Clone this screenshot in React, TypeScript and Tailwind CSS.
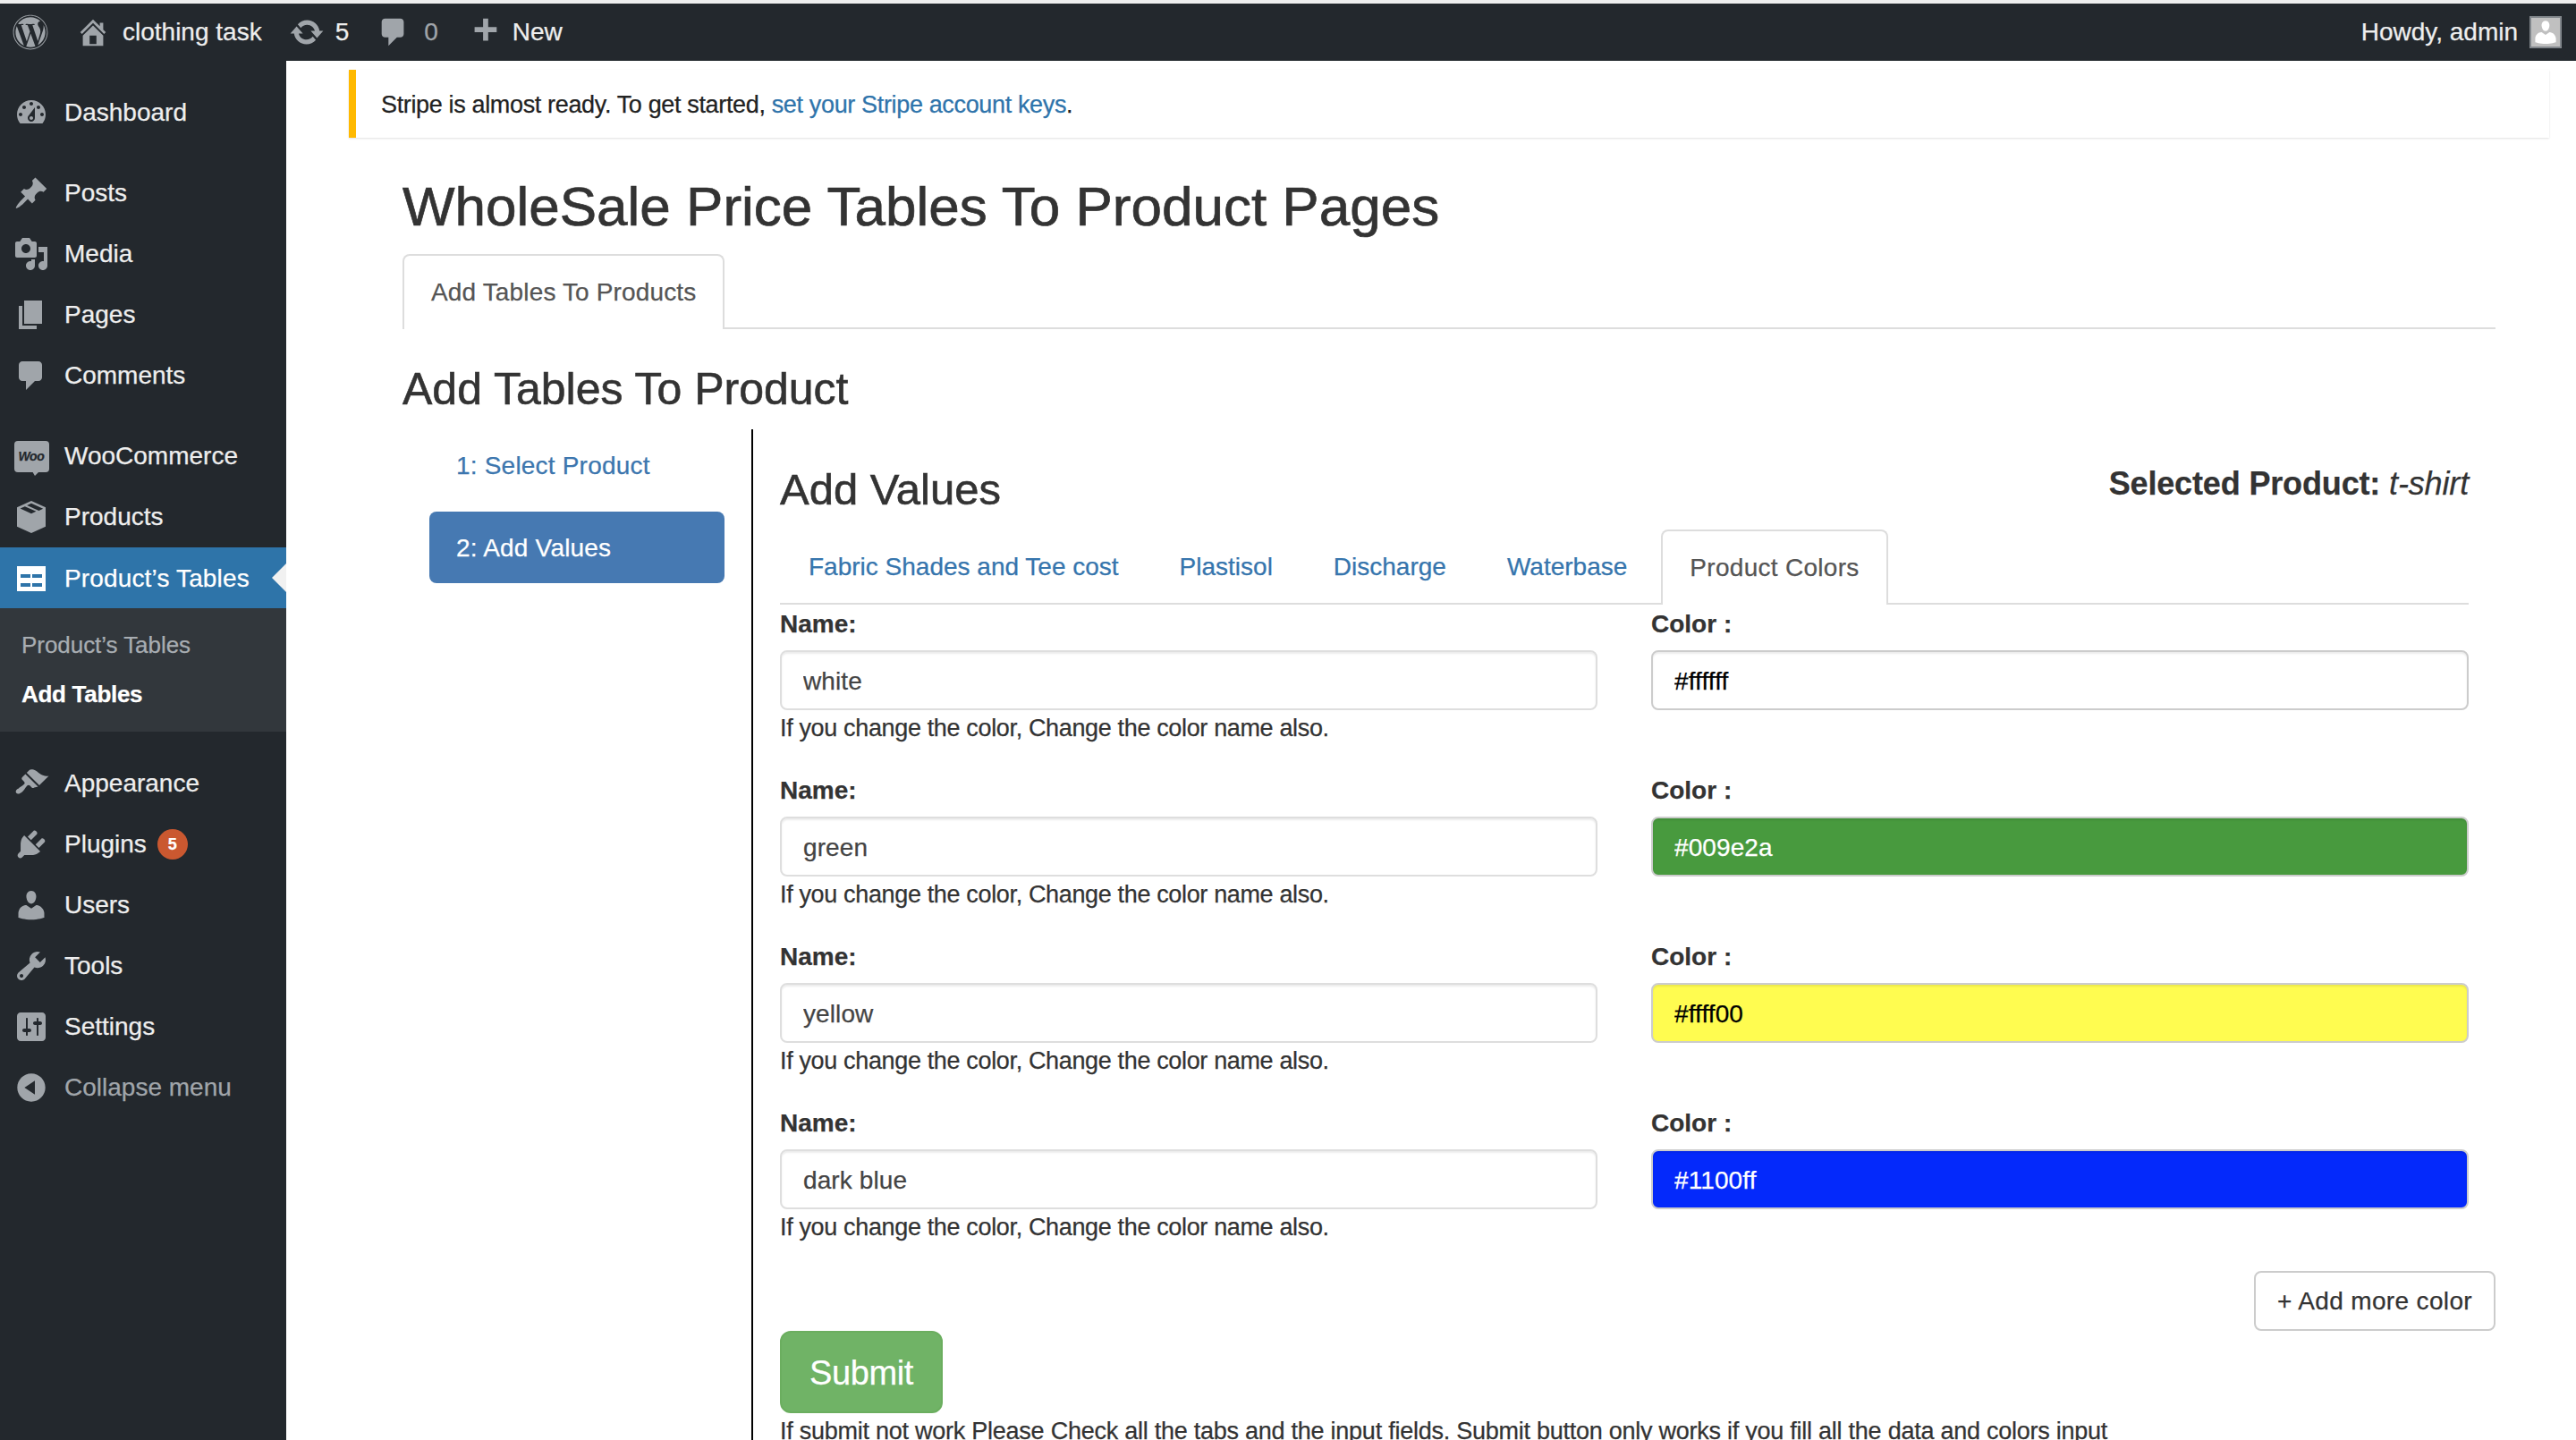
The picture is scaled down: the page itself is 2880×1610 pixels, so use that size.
import { ReactNode } from "react";
import { FaWordpress } from "react-icons/fa";

// Dashicons outlines, all on a 20x20 grid.
const ICONS: Record<string, string> = {
  dashboard:
    "M3.76 16h12.48c1.1-1.37 1.76-3.11 1.76-5 0-4.42-3.58-8-8-8s-8 3.58-8 8c0 1.89.66 3.63 1.76 5zM10 4c.55 0 1 .45 1 1s-.45 1-1 1-1-.45-1-1 .45-1 1-1zM6 6c.55 0 1 .45 1 1s-.45 1-1 1-1-.45-1-1 .45-1 1-1zm8 0c.55 0 1 .45 1 1s-.45 1-1 1-1-.45-1-1 .45-1 1-1zm-5.37 5.55L12 7v6c0 1.1-.9 2-2 2s-2-.9-2-2c0-.57.24-1.08.63-1.45zM4 10c.55 0 1 .45 1 1s-.45 1-1 1-1-.45-1-1 .45-1 1-1zm12 0c.55 0 1 .45 1 1s-.45 1-1 1-1-.45-1-1 .45-1 1-1zm-5 3c0-.55-.45-1-1-1s-1 .45-1 1 .45 1 1 1 1-.45 1-1z",
  post: "M10.44 3.02l1.82-1.82 6.36 6.35-1.83 1.82c-1.05-.68-2.48-.57-3.41.36l-.75.75c-.92.93-1.04 2.35-.35 3.41l-1.83 1.82-2.41-2.41-2.8 2.79c-.42.42-3.38 2.71-3.8 2.29s1.86-3.39 2.28-3.81l2.79-2.79L4.1 9.36l1.83-1.82c1.05.69 2.48.57 3.4-.36l.75-.75c.93-.92 1.05-2.35.36-3.41z",
  media:
    "M13 11V4c0-.55-.45-1-1-1h-1.67L9 1H5L3.67 3H2c-.55 0-1 .45-1 1v7c0 .55.45 1 1 1h10c.55 0 1-.45 1-1zM7 4.5c1.38 0 2.5 1.12 2.5 2.5S8.38 9.5 7 9.5 4.5 8.38 4.5 7 5.62 4.5 7 4.5zM14 6h5v10.5c0 1.38-1.12 2.5-2.5 2.5S14 17.88 14 16.5s1.12-2.5 2.5-2.5c.17 0 .34.02.5.05V9h-3V6zm-4 8.05V13h2v3.5c0 1.38-1.12 2.5-2.5 2.5S7 17.88 7 16.5 8.12 14 9.5 14c.17 0 .34.02.5.05z",
  page: "M6 15V2h10v13H6zm-1 1h8v2H3V5h2v11z",
  comment: "M5 2h9c1.1 0 2 .9 2 2v7c0 1.1-.9 2-2 2h-2l-5 5v-5H5c-1.1 0-2-.9-2-2V4c0-1.1.9-2 2-2z",
  box: "M10 1l8 3.6v10.8L10 19l-8-3.6V4.6zM10 2.4L7.6 3.5l6.6 3 2.4-1.1zM6.4 4.1L3.8 5.3l6.2 2.8 2.7-1.2z",
  brush:
    "M14.48 11.06L7.41 3.99l1.5-1.5c.5-.56 2.3-.47 3.51.32 1.21.8 1.43 1.28 2.91 2.1 1.18.64 2.45 1.26 4.45.85zm-.71.71L6.7 4.7 4.93 6.47c-.39.39-.39 1.02 0 1.41l1.06 1.06c.39.39.39 1.03 0 1.42-.6.6-1.43 1.11-2.21 1.69-.35.26-.7.53-1.01.84C1.43 13.23.99 14.72 1.7 15.43c.71.71 2.2.26 3.54-1.08.31-.31.58-.66.84-1.01.58-.78 1.09-1.61 1.69-2.21.39-.39 1.02-.39 1.41 0l1.06 1.06c.39.39 1.02.39 1.41 0z",
  plug: "M13.11 4.36L9.87 7.6 8 5.73l3.24-3.24c.35-.34 1.05-.2 1.56.32.52.51.66 1.21.31 1.55zm-8 1.77l.91-1.12 9.01 9.01-1.19.84c-.71.71-2.63 1.16-3.82 1.16H6.14L4.9 17.26c-.59.59-1.54.59-2.12 0-.59-.58-.59-1.53 0-2.12l1.24-1.24v-3.88c0-1.13.4-3.19 1.09-3.89zm7.26 3.97l3.24-3.24c.34-.35 1.04-.21 1.55.31.52.51.66 1.21.31 1.55l-3.24 3.25z",
  user: "M10 9.25c-2.27 0-2.73-3.44-2.73-3.44C7 4.02 7.82 2 9.97 2c2.16 0 2.98 2.02 2.71 3.81 0 0-.41 3.44-2.68 3.44zm0 2.57L12.72 10c2.39 0 4.52 2.33 4.52 4.53v2.49s-3.65 1.13-7.24 1.13c-3.65 0-7.24-1.13-7.24-1.13v-2.49c0-2.25 1.94-4.48 4.47-4.48z",
  tools:
    "M16.68 9.77c-1.34 1.34-3.3 1.67-4.95.99l-5.41 6.52c-.99.99-2.59.99-3.58 0s-.99-2.59 0-3.57l6.52-5.42c-.68-1.65-.35-3.61.99-4.95 1.28-1.28 3.12-1.62 4.72-1.06l-2.89 2.89 2.82 2.82 2.86-2.87c.53 1.58.18 3.39-1.08 4.65zM3.81 16.21c.4.39 1.04.39 1.43 0 .4-.4.4-1.04 0-1.43-.39-.4-1.03-.4-1.43 0-.39.39-.39 1.03 0 1.43z",
  settings:
    "M18 16V4c0-1.1-.9-2-2-2H4c-1.1 0-2 .9-2 2v12c0 1.1.9 2 2 2h12c1.1 0 2-.9 2-2zM8 11h1c.55 0 1 .45 1 1s-.45 1-1 1H8v1.5c0 .28-.22.5-.5.5s-.5-.22-.5-.5V13H6c-.55 0-1-.45-1-1s.45-1 1-1h1V5.5c0-.28.22-.5.5-.5s.5.22.5.5V11zm5-2h-1c-.55 0-1-.45-1-1s.45-1 1-1h1V5.5c0-.28.22-.5.5-.5s.5.22.5.5V7h1c.55 0 1 .45 1 1s-.45 1-1 1h-1v5.5c0 .28-.22.5-.5.5s-.5-.22-.5-.5V9z",
  collapse: "M10 2.16c4.33 0 7.84 3.51 7.84 7.84s-3.51 7.84-7.84 7.84S2.16 14.33 2.16 10 5.71 2.16 10 2.16zm2 11.72V6.12L6.18 9.97z",
  home: "M16 8.5l1.53 1.53-1.06 1.06L10 4.62l-6.47 6.47-1.06-1.06L10 2.5l4 4v-2h2v4zm-6-2.46l6 5.99V18H4v-5.97zM12 17v-5H8v5h4z",
  update:
    "M10.2 3.28c3.53 0 6.43 2.61 6.92 6h2.08l-3.5 4-3.5-4h2.32c-.45-1.97-2.21-3.44-4.32-3.44-1.45 0-2.73.71-3.54 1.78L4.95 5.66C6.23 4.2 8.11 3.28 10.2 3.28zm-.4 13.44c-3.52 0-6.43-2.61-6.92-6H.8l3.5-4c1.17 1.33 2.33 2.67 3.5 4H5.48c.45 1.97 2.21 3.44 4.32 3.44 1.45 0 2.73-.71 3.54-1.78l1.71 1.95c-1.28 1.46-3.15 2.38-5.25 2.38z",
  plus: "M17 7v3h-5v5H9v-5H4V7h5V2h3v5h5z",
};

function Dash({ name, className }: { name: string; className: string }) {
  return (
    <svg viewBox="0 0 20 20" className={className} fill="currentColor" fillRule="evenodd">
      <path d={ICONS[name]} />
    </svg>
  );
}

function WooIcon() {
  return (
    <div className="relative flex h-[35px] w-[39px] items-center justify-center rounded-[4px] bg-[#a0a5aa] text-[14px] font-bold italic tracking-[-0.3px] text-[#23282d]">
      Woo
      <div className="absolute -bottom-[4px] left-[20px] h-0 w-0 border-t-[5px] border-r-[5px] border-l-[3px] border-t-[#a0a5aa] border-r-transparent border-l-transparent" />
    </div>
  );
}

function TableIcon() {
  return (
    <svg viewBox="0 0 32 28" className="h-[28px] w-[32px]" fill="white" fillRule="evenodd">
      <path d="M0 0h32v28H0zM4 9v4h11V9zM17 9v4h11V9zM4 19v4h11v-4zM17 19v4h11v-4z" />
    </svg>
  );
}

function MenuItem({
  icon,
  label,
  extra,
  muted,
}: {
  icon: ReactNode;
  label: string;
  extra?: ReactNode;
  muted?: boolean;
}) {
  return (
    <div className={`flex h-[68px] items-center pt-[2px] text-[28px] ${muted ? "text-[#a0a5aa]" : "text-[#eeeeee]"}`}>
      <div className="flex w-[72px] flex-none items-center justify-center pr-[2px] text-[#a0a5aa]">{icon}</div>
      {label}
      {extra}
    </div>
  );
}

const sideIcon = "h-[40px] w-[40px]";

function Sidebar() {
  return (
    <aside className="w-[320px] flex-none bg-[#23282d] pt-[23px]">
      <MenuItem icon={<Dash name="dashboard" className={sideIcon} />} label="Dashboard" />
      <div className="mt-[22px]">
        <MenuItem icon={<Dash name="post" className={sideIcon} />} label="Posts" />
        <MenuItem icon={<Dash name="media" className={sideIcon} />} label="Media" />
        <MenuItem icon={<Dash name="page" className={sideIcon} />} label="Pages" />
        <MenuItem icon={<Dash name="comment" className={sideIcon} />} label="Comments" />
      </div>
      <div className="mt-[22px]">
        <MenuItem icon={<WooIcon />} label="WooCommerce" />
        <MenuItem icon={<Dash name="box" className={sideIcon} />} label="Products" />
      </div>
      <div className="relative mt-[1px] flex h-[68px] items-center bg-[#2e74a9] pt-[2px] text-[28px] tracking-[0.15px] text-white">
        <div className="flex w-[72px] flex-none items-center justify-center pr-[2px]">
          <TableIcon />
        </div>
        Product’s Tables
        <div className="absolute right-0 top-[18px] h-0 w-0 border-y-[16px] border-r-[16px] border-y-transparent border-r-[#f1f1f1]" />
      </div>
      <div className="h-[138px] bg-[#32373c] pl-[24px] pt-[14px] text-[26px]">
        <div className="flex h-[55px] items-center tracking-[-0.05px] text-[#a8adb2]">Product’s Tables</div>
        <div className="flex h-[55px] items-center font-bold tracking-[-0.3px] text-white">Add Tables</div>
      </div>
      <div className="mt-[23px]">
        <MenuItem icon={<Dash name="brush" className={sideIcon} />} label="Appearance" />
        <MenuItem
          icon={<Dash name="plug" className={sideIcon} />}
          label="Plugins"
          extra={
            <span className="ml-[12px] flex h-[34px] w-[34px] items-center justify-center rounded-full bg-[#ca5830] text-[18px] font-bold text-white">
              5
            </span>
          }
        />
        <MenuItem icon={<Dash name="user" className={sideIcon} />} label="Users" />
        <MenuItem icon={<Dash name="tools" className={sideIcon} />} label="Tools" />
        <MenuItem icon={<Dash name="settings" className={sideIcon} />} label="Settings" />
        <MenuItem icon={<Dash name="collapse" className={sideIcon} />} label="Collapse menu" muted />
      </div>
    </aside>
  );
}

function AdminBar() {
  return (
    <header className="flex h-[64px] flex-none items-center bg-[#23282d] text-[28px] text-[#eeeeee]">
      <FaWordpress className="ml-[14px] h-[40px] w-[40px] text-[#a0a5aa]" />
      <Dash name="home" className="ml-[31px] h-[38px] w-[38px] text-[#a0a5aa]" />
      <span className="ml-[14px]">clothing task</span>
      <Dash name="update" className="ml-[30px] h-[40px] w-[40px] text-[#a0a5aa]" />
      <span className="ml-[12px]">5</span>
      <Dash name="comment" className="ml-[31px] h-[38px] w-[38px] text-[#a0a5aa]" />
      <span className="ml-[15px] text-[#a0a5aa]">0</span>
      <Dash name="plus" className="ml-[33px] h-[38px] w-[38px] text-[#a0a5aa]" />
      <span className="ml-[12px]">New</span>
      <span className="ml-auto mr-[13px]">Howdy, admin</span>
      <div className="mr-[16px] h-[36px] w-[36px] overflow-hidden border-2 border-[#82878c] bg-[#c0c0c0]">
        <Dash name="user" className="h-[32px] w-[32px] text-white" />
      </div>
    </header>
  );
}

const TABS = ["Fabric Shades and Tee cost", "Plastisol", "Discharge", "Waterbase"];

const COLORS = [
  { name: "white", value: "#ffffff", input: "bg-white text-black" },
  { name: "green", value: "#009e2a", input: "bg-[#489a3e] text-white" },
  { name: "yellow", value: "#ffff00", input: "bg-[#fffc50] text-black" },
  { name: "dark blue", value: "#1100ff", input: "bg-[#0429fb] text-white" },
];

const fieldBase =
  "block h-[67px] w-full rounded-[8px] border-2 px-[24px] pt-[2px] text-[28px] tracking-[0.1px] shadow-[inset_0_2px_2px_rgba(0,0,0,0.08)] outline-none";

function ColorRow({ name, value, input }: { name: string; value: string; input: string }) {
  return (
    <div className="mb-[30px] grid grid-cols-2 gap-x-[60px]">
      <div>
        <label className="mb-[9px] block h-[41px] font-bold leading-[41px] tracking-[0px]">Name:</label>
        <input readOnly value={name} className={`${fieldBase} border-[#dedede] bg-white text-[#444]`} />
        <p className="h-[39px] text-[27px] leading-[41px]">If you change the color, Change the color name also.</p>
      </div>
      <div>
        <label className="mb-[9px] block h-[41px] font-bold leading-[41px] tracking-[0px]">Color :</label>
        <input readOnly value={value} className={`${fieldBase} border-[#cccccc] ${input}`} />
      </div>
    </div>
  );
}

function AddValues() {
  return (
    <div className="min-w-0 flex-1 pl-[30px] pr-[30px] pt-[40px]">
      <div className="flex items-start justify-between">
        <h3 className="pt-[2px] text-[49px] leading-[51px] tracking-[0px] text-[#333] [-webkit-text-stroke:0.6px_#333]">
          Add Values
        </h3>
        <div className="pt-[1px] text-[36px] leading-[40px] tracking-[-0.15px] text-[#333]">
          <b className="font-bold">Selected Product:</b> <i>t-shirt</i>
        </div>
      </div>
      <div className="mt-[19px] flex h-[84px] items-stretch border-b-2 border-[#dddddd] pl-[2px] text-[28px] tracking-[0px]">
        {TABS.map((t) => (
          <div key={t} className="mr-[8px] flex items-center px-[30px] pt-[2px] text-[#3675ad]">
            {t}
          </div>
        ))}
        <div className="-mb-[2px] flex items-center rounded-t-[8px] border-2 border-b-0 border-[#dddddd] bg-white px-[30px] tracking-[0.3px] text-[#555]">
          Product Colors
        </div>
      </div>
      <div className="pt-[1px]">
        {COLORS.map((c) => (
          <ColorRow key={c.name} {...c} />
        ))}
      </div>
      <div className="-mr-[30px] mt-[3px] flex justify-end">
        <button className="h-[67px] w-[270px] rounded-[8px] border-2 border-[#cccccc] bg-white text-[28px] tracking-[0.35px] text-[#333]">
          + Add more color
        </button>
      </div>
      <button className="block h-[92px] w-[182px] rounded-[12px] border-2 border-[#6bae5f] bg-[#70b366] pt-[2px] text-[38px] tracking-[-0.4px] text-white">
        Submit
      </button>
      <p className="whitespace-nowrap text-[27px] leading-[40px] tracking-[-0.25px]">
        If submit not work Please Check all the tabs and the input fields. Submit button only works if you fill all the data and colors input
      </p>
    </div>
  );
}

export default function App() {
  return (
    <div className="flex h-[1610px] w-[2880px] flex-col overflow-hidden bg-[#eeeeee] pt-[4px] font-['Liberation_Sans',Arial,sans-serif] [-webkit-text-stroke:0.25px]">
      <AdminBar />
      <div className="flex min-h-0 flex-1">
        <Sidebar />
        <main className="min-w-0 flex-1 overflow-hidden bg-white pr-[90px] text-[28px] tracking-[-0.35px] text-[#333]">
          <div className="ml-[70px] mr-[-60px] mt-[10px] flex h-[76px] items-center border-l-[8px] border-[#ffb900] bg-white pl-[28px] pt-[2px] text-[27px] text-[#222] shadow-[0_1px_2px_rgba(0,0,0,0.12)]">
            Stripe is almost ready. To get started,&nbsp;
            <a className="text-[#2f74ab]">set your Stripe account keys</a>.
          </div>
          <div className="pl-[130px]">
            <h1 className="mt-[44px] text-[62px] leading-[66px] tracking-[0px] text-[#333] [-webkit-text-stroke:0.7px_#333]">
              WholeSale Price Tables To Product Pages
            </h1>
            <div className="mt-[20px] flex h-[84px] border-b-2 border-[#dddddd]">
              <div className="-mb-[2px] flex items-center rounded-t-[8px] border-2 border-b-0 border-[#dddddd] bg-white px-[30px] tracking-[0.15px] text-[#555]">
                Add Tables To Products
              </div>
            </div>
            <h3 className="mt-[40px] pt-[2px] text-[50px] leading-[51px] tracking-[0px] text-[#333] [-webkit-text-stroke:0.6px_#333]">
              Add Tables To Product
            </h3>
            <div className="mt-[19px] flex">
              <div className="ml-[30px] w-[330px] flex-none tracking-[0.2px]">
                <div className="flex h-[80px] items-center px-[30px] pt-[2px] text-[#3c76ae]">1: Select Product</div>
                <div className="mt-[12px] flex h-[80px] items-center rounded-[8px] bg-[#4679b2] px-[30px] pt-[2px] text-white">
                  2: Add Values
                </div>
              </div>
              <div className="ml-[30px] border-l-2 border-black" />
              <AddValues />
            </div>
          </div>
        </main>
      </div>
    </div>
  );
}
